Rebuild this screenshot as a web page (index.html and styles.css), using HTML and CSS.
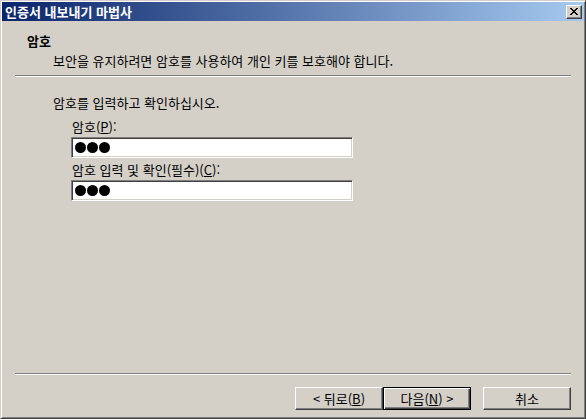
FILE: index.html
```html
<!DOCTYPE html>
<html lang="ko">
<head>
    <meta charset="UTF-8">
    <title>인증서 내보내기 마법사</title>
<link rel="stylesheet" href="styles.css">
</head>
<body>
    <div class="window">
        <div class="titlebar">
            <span class="title">인증서 내보내기 마법사</span>
            <button class="close-btn" aria-label="닫기">
                <svg width="8" height="7" viewBox="0 0 8 7">
                    <path d="M0 0h2v1h1v1h2v-1h1v-1h2v1h-1v1h-1v1h-1v1h1v1h1v1h1v1h-2v-1h-1v-1h-2v1h-1v1h-2v-1h1v-1h1v-1h1v-1h-1v-1h-1v-1h-1z" fill="#000"/>
                </svg>
            </button>
        </div>

        <div class="header">
            <div class="header-title">암호</div>
            <div class="header-sub">보안을 유지하려면 암호를 사용하여 개인 키를 보호해야 합니다.</div>
        </div>
        <div class="separator"></div>

        <div class="content">
            <div class="intro">암호를 입력하고 확인하십시오.</div>
            <div class="field">
                <label>암호(<u>P</u>):</label>
                <div class="input"><span class="dot"></span><span class="dot"></span><span class="dot"></span></div>
            </div>
            <div class="field">
                <label>암호 입력 및 확인(필수)(<u>C</u>):</label>
                <div class="input"><span class="dot"></span><span class="dot"></span><span class="dot"></span></div>
            </div>
        </div>

        <div class="separator"></div>
        <div class="buttons">
            <button class="btn">&lt; 뒤로(<u>B</u>)</button>
            <button class="btn default">다음(<u>N</u>) &gt;</button>
            <button class="btn cancel">취소</button>
        </div>
    </div>
</body>
</html>
```

FILE: styles.css
```css
body {
    margin: 0;
    font-family: "Noto Sans CJK KR", "Noto Sans", sans-serif;
    font-size: 13px;
    color: #000;
    background: #d4d0c8;
}

.window {
    width: 586px;
    height: 419px;
    box-sizing: border-box;
    padding: 1px;
    background: #d4d0c8;
    border: 1px solid;
    border-color: #d4d0c8 #404040 #404040 #d4d0c8;
    box-shadow: inset 1px 1px #ffffff, inset -1px -1px #808080;
    display: flex;
    flex-direction: column;
}

.titlebar {
    height: 19px;
    display: flex;
    align-items: center;
    justify-content: space-between;
    padding: 0 2px 0 3px;
    background: linear-gradient(to right, #0a246a, #a6caf0);
}

.title {
    color: #fff;
    font-weight: bold;
    line-height: 16px;
}

.close-btn {
    width: 16px;
    height: 14px;
    padding: 0;
    display: flex;
    align-items: center;
    justify-content: center;
    background: #d4d0c8;
    border: 1px solid;
    border-color: #ffffff #404040 #404040 #ffffff;
    box-shadow: inset -1px -1px #808080;
}

.header {
    padding: 12px 0 6px 25px;
    line-height: 16px;
}

.header-title {
    font-weight: bold;
}

.header-sub {
    margin-top: 4px;
    padding-left: 26px;
}

.separator {
    margin: 0 13px;
    height: 1px;
    background: #808080;
    border-bottom: 1px solid #ffffff;
}

.content {
    flex: 1;
    display: flex;
    flex-direction: column;
    padding: 18px 0 0 51px;
    line-height: 16px;
}

.intro {
    margin-bottom: 4px;
}

.field {
    display: flex;
    flex-direction: column;
    padding-left: 18px;
}

.field label {
    margin-top: 4px;
    margin-bottom: 2px;
    padding-left: 1px;
}

.input {
    width: 282px;
    height: 21px;
    box-sizing: border-box;
    background: #fff;
    border: 1px solid;
    border-color: #808080 #ffffff #ffffff #808080;
    box-shadow: inset 1px 1px #404040, inset -1px -1px #d4d0c8;
    display: flex;
    align-items: center;
    gap: 1px;
    padding-left: 3px;
}

.dot {
    width: 11px;
    height: 11px;
    border-radius: 50%;
    background: #000;
}

.buttons {
    display: flex;
    justify-content: flex-end;
    padding: 12px 13px 7px 0;
}

.btn {
    width: 88px;
    height: 23px;
    padding: 0;
    font-family: inherit;
    font-size: 13px;
    line-height: 16px;
    color: #000;
    background: #d4d0c8;
    border: 1px solid;
    border-color: #ffffff #404040 #404040 #ffffff;
    box-shadow: inset -1px -1px #808080;
}

.btn.default {
    border-color: #000;
    box-shadow: inset 1px 1px #ffffff, inset -1px -1px #404040, inset -2px -2px #808080;
}

.btn.cancel {
    margin-left: 12px;
}
```
